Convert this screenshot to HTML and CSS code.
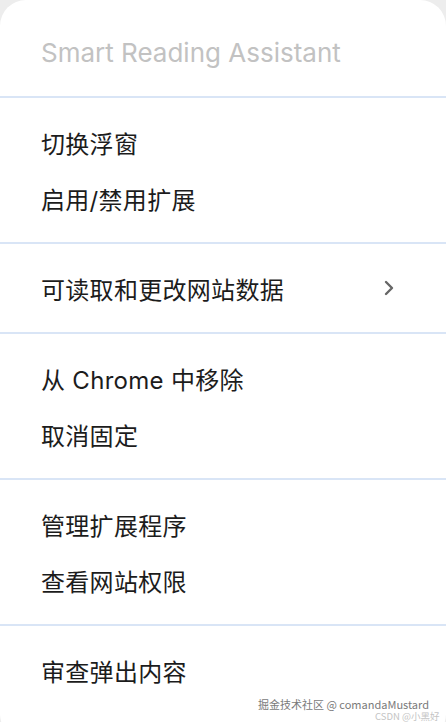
FILE: index.html
```html
<!DOCTYPE html>
<html lang="zh">
<head>
<meta charset="utf-8">
<title>Menu</title>
<link rel="stylesheet" href="styles.css">
</head>
<body>
<div class="menu">
  <div class="header">Smart Reading Assistant</div>
  <div class="section">
    <div class="item">切换浮窗</div>
    <div class="item">启用/禁用扩展</div>
  </div>
  <div class="section">
    <div class="item"><span>可读取和更改网站数据</span>
      <svg class="chev" width="12" height="16" viewBox="0 0 12 16"><path d="M3 2 L9 8 L3 14" fill="none" stroke="#666" stroke-width="2.4" stroke-linecap="round" stroke-linejoin="round"/></svg>
    </div>
  </div>
  <div class="section">
    <div class="item">从 Chrome 中移除</div>
    <div class="item">取消固定</div>
  </div>
  <div class="section">
    <div class="item">管理扩展程序</div>
    <div class="item">查看网站权限</div>
  </div>
  <div class="section last">
    <div class="item">审查弹出内容</div>
  </div>
  <div class="wm">
    <span class="wm1">掘金技术社区 @ comandaMustard</span>
    <span class="wm2">CSDN @小黑好</span>
  </div>
</div>
</body>
</html>
```
FILE: styles.css
```css
html, body {
  margin: 0;
  padding: 0;
  background: #ededed;
}
body {
  width: 446px;
  height: 722px;
  overflow: hidden;
}
.menu {
  position: relative;
  background: #ffffff;
  border-radius: 26px;
  height: 740px;
  font-family: Inter, "Noto Sans CJK SC", sans-serif;
  color: #1c1c1c;
}
.header {
  height: 88px;
  padding-top: 8px;
  padding-left: 41px;
  display: flex;
  align-items: center;
  font-size: 26px;
  color: #c2c2c2;
  border-bottom: 2px solid #d9e5f6;
}
.section {
  padding: 16px 0;
  border-bottom: 2px solid #d9e5f6;
}
.section.last {
  border-bottom: none;
}
.item {
  height: 56px;
  padding-left: 41px;
  padding-right: 51px;
  display: flex;
  align-items: center;
  justify-content: space-between;
  font-size: 24px;
  letter-spacing: 0.3px;
}
.chev {
  display: block;
}
.wm {
  position: absolute;
  left: 258px;
  top: 697px;
  font-family: "Noto Sans CJK SC", sans-serif;
  line-height: 14px;
}
.wm1 {
  display: block;
  font-size: 11px;
  color: #7a7a7a;
  white-space: nowrap;
}
.wm2 {
  display: block;
  padding-left: 117px;
  font-size: 9.5px;
  line-height: 11px;
  color: #c4c4c4;
  white-space: nowrap;
}
```
